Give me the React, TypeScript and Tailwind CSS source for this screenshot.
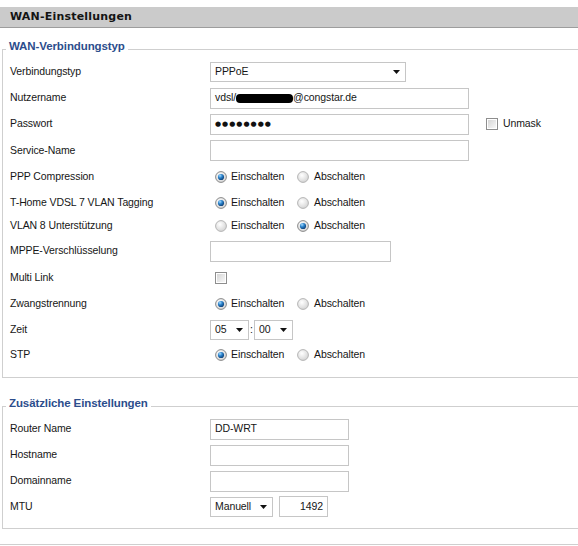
import { ReactNode } from "react";

/* ================= SMALL CONTROLS ================= */

function Radio({ checked }: { checked?: boolean }) {
  return (
    <svg width="12" height="12" viewBox="0 0 12 12" className="shrink-0">
      <defs>
        <radialGradient id="radioBg" cx="40%" cy="35%" r="70%">
          <stop offset="0" stopColor="#ffffff" />
          <stop offset="1" stopColor="#d2d2d2" />
        </radialGradient>
        <radialGradient id="radioDot" cx="35%" cy="30%" r="75%">
          <stop offset="0" stopColor="#a6dcff" />
          <stop offset="0.45" stopColor="#2b83cc" />
          <stop offset="1" stopColor="#0c3c72" />
        </radialGradient>
      </defs>
      <circle
        cx="6"
        cy="6"
        r="5.4"
        fill="url(#radioBg)"
        stroke={checked ? "#8a8a8a" : "#b4b4b4"}
        strokeWidth="1"
      />
      {checked && <circle cx="6" cy="6" r="3.1" fill="url(#radioDot)" />}
    </svg>
  );
}

function Checkbox() {
  return (
    <div className="w-[12px] h-[12px] border border-[#8e8e8e] bg-white p-[1px] shrink-0">
      <div className="w-full h-full bg-gradient-to-br from-[#d6d6d6] to-[#f7f7f7]" />
    </div>
  );
}

function OnOff({ on }: { on: boolean }) {
  return (
    <div className="flex items-center pl-[5px]">
      <Radio checked={on} />
      <span className="ml-[4px] w-[66px]">Einschalten</span>
      <Radio checked={!on} />
      <span className="ml-[5px]">Abschalten</span>
    </div>
  );
}

function TextBox({
  className,
  children,
}: {
  className: string;
  children?: ReactNode;
}) {
  return (
    <div
      className={`h-[21px] border border-[#c6c6c6] bg-white flex items-center px-[4px] whitespace-nowrap ${className}`}
    >
      {children}
    </div>
  );
}

function Select({ className, text }: { className: string; text: string }) {
  return (
    <div
      className={`h-[20px] border border-[#c6c6c6] bg-white flex items-center justify-between pl-[4px] pr-[5px] ${className}`}
    >
      <span>{text}</span>
      <svg width="7" height="4" viewBox="0 0 7 4">
        <polygon points="0,0 7,0 3.5,4" fill="#111" />
      </svg>
    </div>
  );
}

function Row({
  label,
  className = "h-[26px]",
  children,
}: {
  label: string;
  className?: string;
  children?: ReactNode;
}) {
  return (
    <div className={`flex items-center ${className}`}>
      <div className="w-[200px] shrink-0">{label}</div>
      {children}
    </div>
  );
}

function Section({
  title,
  className,
  children,
}: {
  title: string;
  className: string;
  children: ReactNode;
}) {
  return (
    <fieldset
      className={`ml-[2px] w-[620px] border border-[#cfcfcf] ${className}`}
    >
      <legend className="ml-[3px] px-[3px] pb-[6px] text-[11.5px] leading-[14px] font-bold text-[#2c4d8c]">
        {title}
      </legend>
      <div className="pl-[7px]">{children}</div>
    </fieldset>
  );
}

/* ================= PAGE ================= */

export default function App() {
  return (
    <div className="w-[578px] h-[546px] overflow-hidden bg-white text-[10.5px] tracking-[-0.1px] text-[#161616] font-['Liberation_Sans',Arial,sans-serif]">
      <div className="mt-[7px] h-[21px] bg-[#cbcbcb] border-b border-[#9d9d9d] pl-[10px] flex items-center font-['DejaVu_Sans',sans-serif] font-bold text-[11px] tracking-[0.2px] text-[#141414]">
        WAN-Einstellungen
      </div>

      {/* WAN connection */}
      <Section title="WAN-Verbindungstyp" className="mt-[11px] pb-[9px]">
        <Row label="Verbindungstyp">
          <Select className="w-[196px]" text="PPPoE" />
        </Row>
        <Row label="Nutzername">
          <TextBox className="w-[259px]">
            vdsl/
            <span className="inline-block w-[57px] h-[9px] bg-black rounded-[4px]" />
            @congstar.de
          </TextBox>
        </Row>
        <Row label="Passwort">
          <TextBox className="w-[259px]">
            <span className="font-['DejaVu_Sans',sans-serif] text-[7px] tracking-[1px] text-[#111]">
              ●●●●●●●●
            </span>
          </TextBox>
          <div className="ml-[17px] flex items-center">
            <Checkbox />
            <span className="ml-[5px]">Unmask</span>
          </div>
        </Row>
        <Row label="Service-Name" className="h-[27px]">
          <TextBox className="w-[259px] h-[20px]" />
        </Row>
        <Row label="PPP Compression">
          <OnOff on={true} />
        </Row>
        <Row label="T-Home VDSL 7 VLAN Tagging">
          <OnOff on={true} />
        </Row>
        <Row label="VLAN 8 Unterstützung" className="h-[20px]">
          <OnOff on={false} />
        </Row>
        <Row label="MPPE-Verschlüsselung" className="h-[30px]">
          <TextBox className="w-[181px]" />
        </Row>
        <Row label="Multi Link" className="h-[24px]">
          <div className="pl-[5px]">
            <Checkbox />
          </div>
        </Row>
        <Row label="Zwangstrennung" className="h-[27px]">
          <OnOff on={true} />
        </Row>
        <Row label="Zeit" className="h-[25px]">
          <div className="flex items-center">
            <Select className="w-[39px] h-[19px]" text="05" />
            <span className="w-[5px] text-center">:</span>
            <Select className="w-[39px] h-[19px]" text="00" />
          </div>
        </Row>
        <Row label="STP">
          <OnOff on={true} />
        </Row>
      </Section>

      {/* extra settings */}
      <Section title="Zusätzliche Einstellungen" className="mt-[18px] pb-[9px]">
        <Row label="Router Name">
          <TextBox className="w-[139px]">DD-WRT</TextBox>
        </Row>
        <Row label="Hostname">
          <TextBox className="w-[139px]" />
        </Row>
        <Row label="Domainname">
          <TextBox className="w-[139px]" />
        </Row>
        <Row label="MTU" className="h-[25px]">
          <div className="flex items-center">
            <Select className="w-[63px]" text="Manuell" />
            <TextBox className="ml-[6px] w-[49px] h-[20px] justify-end">
              1492
            </TextBox>
          </div>
        </Row>
      </Section>

      <div className="mt-[15px] border-t border-[#cfcfcf]" />
    </div>
  );
}
